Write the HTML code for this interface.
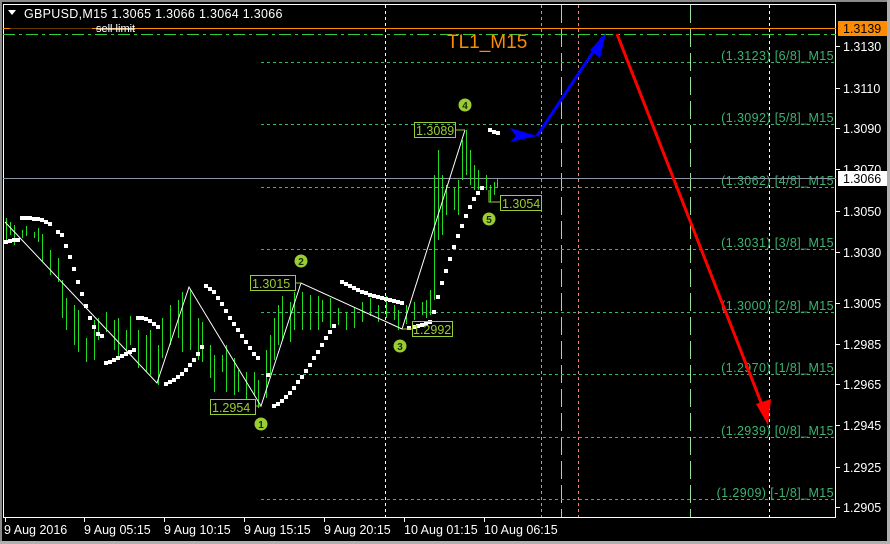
<!DOCTYPE html>
<html><head><meta charset="utf-8"><style>
html,body{margin:0;padding:0;background:#000;width:890px;height:544px;overflow:hidden}
svg{display:block}
text{font-family:"Liberation Sans",sans-serif}
</style></head><body>
<svg width="890" height="544" viewBox="0 0 890 544" xmlns="http://www.w3.org/2000/svg">
<rect width="890" height="544" fill="#000"/>
<rect x="0" y="0" width="890" height="2" fill="#8a8a8a"/>
<rect x="0" y="0" width="2" height="544" fill="#8a8a8a"/>
<rect x="0" y="541" width="890" height="3" fill="#b0b0b0"/>
<rect x="887" y="0" width="3" height="544" fill="#b0b0b0"/>
<path d="M3.5 4.5 H835.5 V517.5 H3.5 Z" fill="none" stroke="#fff" stroke-width="1"/>
<g fill="none" stroke-width="1">
<path d="M385.5 5V517" stroke="#fff" stroke-dasharray="3,3"/>
<path d="M541.5 5V517" stroke="#f08070" stroke-dasharray="3,3"/>
<path d="M578.5 5V517" stroke="#f08070" stroke-dasharray="3,3"/>
<path d="M561.5 5V517" stroke="#98e098" stroke-dasharray="18,6"/>
<path d="M690.5 5V517" stroke="#98e098" stroke-dasharray="18,6"/>
<path d="M769.5 5V517" stroke="#fff" stroke-dasharray="3,3"/>
</g>
<g stroke="#3cb371" stroke-dasharray="3,3" stroke-width="1">
<path d="M261 62.5H835"/><path d="M261 124.5H835"/><path d="M261 187.5H835"/><path d="M261 249.5H835"/>
<path d="M261 312.5H835"/><path d="M261 374.5H835"/><path d="M261 437.5H835"/><path d="M261 499.5H835"/>
</g>
<g fill="#3cb371" font-size="12.5" text-anchor="end" letter-spacing="0.4">
<text x="834" y="60">(1.3123) [6/8]_M15</text>
<text x="834" y="122">(1.3092) [5/8]_M15</text>
<text x="834" y="185">(1.3062) [4/8]_M15</text>
<text x="834" y="247">(1.3031) [3/8]_M15</text>
<text x="834" y="310">(1.3000) [2/8]_M15</text>
<text x="834" y="372">(1.2970) [1/8]_M15</text>
<text x="834" y="435">(1.2939) [0/8]_M15</text>
<text x="834" y="497">(1.2909) [-1/8]_M15</text>
</g>
<path d="M3 28.5H836" stroke="#ff8c00" stroke-width="1"/>
<path d="M3 34.5H836" stroke="#32cd32" stroke-width="1" stroke-dasharray="12,4,3,4"/>
<path d="M3 178.5H836" stroke="#8a96a6" stroke-width="1"/>
<rect x="10" y="20" width="82" height="14" fill="#000" opacity="0.6"/>
<text x="96" y="32" font-size="11" fill="#fff" text-decoration="line-through">sell limit</text>
<text x="447" y="48" font-size="19" fill="#ff8c00">TL1_M15</text>
<path stroke="#22dd22" stroke-width="1" fill="none" d="
M6.5 218V240 M10.5 222V235 M14.5 225V245 M22.5 230V238 M26.5 226V236 M34.5 232V238 M38.5 228V242 M42.5 234V262 M50.5 250V275 M58.5 258V282
M62.5 280V318 M66.5 298V330 M74.5 305V345 M78.5 310V352 M86.5 338V362 M94.5 320V360 M98.5 318V340 M106.5 312V332 M114.5 320V350 M118.5 318V360 M126.5 330V355 M130.5 316V345
M138.5 330V368 M146.5 335V372 M150.5 330V375 M158.5 345V385 M162.5 318V358 M170.5 305V345 M178.5 300V338 M182.5 292V352 M190.5 290V350 M198.5 318V360 M202.5 322V362
M210.5 345V378 M214.5 355V392 M222.5 355V372 M226.5 345V392 M234.5 358V395 M238.5 370V392 M246.5 372V400 M254.5 372V396 M258.5 380V408 M266.5 350V398 M270.5 335V375
M274.5 318V360 M278.5 305V345 M282.5 296V340 M290.5 302V342 M294.5 292V330 M302.5 292V330 M310.5 295V330 M318.5 296V330 M322.5 300V322 M330.5 298V328 M338.5 308V325 M346.5 312V330 M354.5 308V328 M362.5 302V322 M370.5 298V316 M378.5 305V322 M386.5 296V318 M394.5 305V320 M398.5 310V330 M406.5 305V324 M414.5 302V320 M422.5 302V315 M426.5 300V318 M430.5 290V315
M434.5 175V300 M438.5 150V240 M442.5 175V235 M446.5 185V215 M454.5 188V210 M458.5 180V215 M462.5 140V180 M466.5 130V175 M470.5 150V185 M474.5 165V190 M478.5 170V190 M486.5 175V190 M490.5 185V202 M494.5 182V195 M497.5 178V188"/>
<g fill="#fff">
<rect x="4" y="240" width="4" height="4"/><rect x="8" y="239" width="4" height="4"/><rect x="12" y="238" width="4" height="4"/><rect x="16" y="238" width="4" height="4"/>
<rect x="20" y="216" width="4" height="4"/><rect x="24" y="216" width="4" height="4"/><rect x="28" y="216" width="4" height="4"/><rect x="32" y="217" width="4" height="4"/><rect x="36" y="217" width="4" height="4"/><rect x="40" y="218" width="4" height="4"/><rect x="44" y="220" width="4" height="4"/><rect x="48" y="222" width="4" height="4"/><rect x="56" y="230" width="4" height="4"/><rect x="60" y="233" width="4" height="4"/><rect x="64" y="244" width="4" height="4"/><rect x="68" y="255" width="4" height="4"/><rect x="72" y="267" width="4" height="4"/><rect x="76" y="280" width="4" height="4"/><rect x="80" y="292" width="4" height="4"/><rect x="84" y="304" width="4" height="4"/><rect x="88" y="316" width="4" height="4"/><rect x="92" y="325" width="4" height="4"/>
<rect x="96" y="332" width="4" height="4"/><rect x="100" y="334" width="4" height="4"/><rect x="104" y="361" width="4" height="4"/><rect x="108" y="360" width="4" height="4"/><rect x="112" y="358" width="4" height="4"/><rect x="116" y="356" width="4" height="4"/><rect x="120" y="354" width="4" height="4"/><rect x="124" y="352" width="4" height="4"/><rect x="128" y="350" width="4" height="4"/><rect x="132" y="348" width="4" height="4"/>
<rect x="136" y="316" width="4" height="4"/><rect x="140" y="316" width="4" height="4"/><rect x="144" y="317" width="4" height="4"/><rect x="148" y="319" width="4" height="4"/><rect x="152" y="322" width="4" height="4"/><rect x="156" y="325" width="4" height="4"/>
<rect x="164" y="382" width="4" height="4"/><rect x="168" y="380" width="4" height="4"/><rect x="172" y="378" width="4" height="4"/><rect x="176" y="375" width="4" height="4"/><rect x="180" y="372" width="4" height="4"/><rect x="184" y="368" width="4" height="4"/><rect x="188" y="363" width="4" height="4"/><rect x="192" y="358" width="4" height="4"/><rect x="196" y="352" width="4" height="4"/><rect x="200" y="345" width="4" height="4"/>
<rect x="204" y="284" width="4" height="4"/><rect x="208" y="287" width="4" height="4"/><rect x="212" y="290" width="4" height="4"/><rect x="216" y="296" width="4" height="4"/><rect x="220" y="302" width="4" height="4"/><rect x="224" y="309" width="4" height="4"/><rect x="228" y="316" width="4" height="4"/><rect x="232" y="322" width="4" height="4"/><rect x="236" y="328" width="4" height="4"/><rect x="240" y="334" width="4" height="4"/><rect x="244" y="340" width="4" height="4"/><rect x="248" y="346" width="4" height="4"/><rect x="252" y="352" width="4" height="4"/><rect x="256" y="356" width="4" height="4"/><rect x="266" y="373" width="4" height="4"/>
<rect x="272" y="404" width="4" height="4"/><rect x="276" y="402" width="4" height="4"/><rect x="280" y="399" width="4" height="4"/><rect x="284" y="395" width="4" height="4"/><rect x="288" y="391" width="4" height="4"/><rect x="292" y="386" width="4" height="4"/><rect x="296" y="380" width="4" height="4"/><rect x="300" y="375" width="4" height="4"/><rect x="304" y="369" width="4" height="4"/><rect x="308" y="363" width="4" height="4"/><rect x="312" y="356" width="4" height="4"/><rect x="316" y="350" width="4" height="4"/><rect x="320" y="343" width="4" height="4"/><rect x="324" y="336" width="4" height="4"/><rect x="328" y="330" width="4" height="4"/><rect x="332" y="324" width="4" height="4"/>
<rect x="340" y="280" width="4" height="4"/><rect x="344" y="282" width="4" height="4"/><rect x="348" y="284" width="4" height="4"/><rect x="352" y="286" width="4" height="4"/><rect x="356" y="288" width="4" height="4"/><rect x="360" y="290" width="4" height="4"/><rect x="364" y="291" width="4" height="4"/><rect x="368" y="293" width="4" height="4"/><rect x="372" y="294" width="4" height="4"/><rect x="376" y="295" width="4" height="4"/><rect x="380" y="296" width="4" height="4"/><rect x="384" y="297" width="4" height="4"/><rect x="388" y="298" width="4" height="4"/><rect x="392" y="299" width="4" height="4"/><rect x="396" y="300" width="4" height="4"/><rect x="400" y="301" width="4" height="4"/>
<rect x="407" y="326" width="4" height="4"/><rect x="412" y="325" width="4" height="4"/><rect x="416" y="324" width="4" height="4"/><rect x="420" y="323" width="4" height="4"/><rect x="424" y="322" width="4" height="4"/><rect x="428" y="320" width="4" height="4"/><rect x="432" y="310" width="4" height="4"/><rect x="436" y="295" width="4" height="4"/><rect x="440" y="281" width="4" height="4"/><rect x="444" y="269" width="4" height="4"/><rect x="448" y="257" width="4" height="4"/><rect x="452" y="245" width="4" height="4"/><rect x="456" y="234" width="4" height="4"/><rect x="460" y="224" width="4" height="4"/><rect x="464" y="214" width="4" height="4"/><rect x="468" y="205" width="4" height="4"/><rect x="472" y="197" width="4" height="4"/><rect x="476" y="191" width="4" height="4"/><rect x="480" y="186" width="4" height="4"/>
<rect x="488" y="128" width="4" height="4"/><rect x="492" y="130" width="4" height="4"/><rect x="496" y="131" width="4" height="4"/>
</g>
<polyline fill="none" stroke="#fff" stroke-width="1" points="5,222 157,383 189,287 261,406 301,283 402,329 465,130"/>
<g fill="none" stroke="#9acd32" stroke-width="1">
<path d="M295 283H301"/><path d="M255 406H261"/><path d="M402 329H412"/><path d="M455 130H465"/><path d="M489 190V202H500"/>
<rect x="250.5" y="275.5" width="45" height="15"/><rect x="210.5" y="399.5" width="45" height="15"/><rect x="412.5" y="321.5" width="40" height="15"/><rect x="414.5" y="122.5" width="41" height="15"/><rect x="500.5" y="195.5" width="41" height="15"/>
</g>
<g fill="#9acd32" font-size="12.5">
<text x="252" y="288">1.3015</text><text x="212" y="412">1.2954</text><text x="413" y="334">1.2992</text><text x="416" y="135">1.3089</text><text x="502" y="208">1.3054</text>
</g>
<g fill="#9acd32"><circle cx="261" cy="424" r="6.5"/><circle cx="301" cy="261" r="6.5"/><circle cx="400" cy="346" r="6.5"/><circle cx="465" cy="105" r="6.5"/><circle cx="489" cy="219" r="6.5"/></g>
<g fill="#1a2a00" font-size="10" font-weight="bold" text-anchor="middle">
<text x="261" y="428">1</text><text x="301" y="265">2</text><text x="400" y="350">3</text><text x="465" y="109">4</text><text x="489" y="223">5</text>
</g>
<path d="M537 136 L603 37" stroke="#0000ff" stroke-width="3" fill="none"/>
<polygon points="510,128 537,136 510,142 516,136" fill="#0000ff"/>
<polygon points="606,33 600,58 590,50" fill="#0000ff"/>
<path d="M617 34 L764 410" stroke="#ff0000" stroke-width="3" fill="none"/>
<polygon points="768,425 756,404 771,399" fill="#ff0000"/>
<polygon points="8,10 16,10 12,15" fill="#fff"/>
<text x="24" y="18" font-size="12.5" fill="#fff" letter-spacing="0.3">GBPUSD,M15  1.3065 1.3066 1.3064 1.3066</text>
<g stroke="#fff" stroke-width="1">
<path d="M836 46.5h4M836 88.5h4M836 128.5h4M836 169.5h4M836 211.5h4M836 252.5h4M836 303.5h4M836 344.5h4M836 384.5h4M836 425.5h4M836 467.5h4M836 507.5h4"/>
<path d="M5.5 517v5M84.5 517v5M164.5 517v5M244.5 517v5M324.5 517v5M404.5 517v5M484.5 517v5"/>
</g>
<g fill="#fff" font-size="12.5">
<text x="843" y="51">1.3130</text><text x="843" y="93">1.3110</text><text x="843" y="133">1.3090</text><text x="843" y="174">1.3070</text><text x="843" y="216">1.3050</text><text x="843" y="257">1.3030</text><text x="843" y="308">1.3005</text><text x="843" y="349">1.2985</text><text x="843" y="389">1.2965</text><text x="843" y="430">1.2945</text><text x="843" y="472">1.2925</text><text x="843" y="512">1.2905</text>
</g>
<rect x="838" y="21" width="49" height="15" fill="#ff8c00"/>
<text x="843" y="33" font-size="12.5" fill="#000">1.3139</text>
<rect x="838" y="171" width="49" height="15" fill="#fff"/>
<text x="843" y="183" font-size="12.5" fill="#000">1.3066</text>
<g fill="#fff" font-size="12.5">
<text x="4" y="534">9 Aug 2016</text><text x="84" y="534">9 Aug 05:15</text><text x="164" y="534">9 Aug 10:15</text><text x="244" y="534">9 Aug 15:15</text><text x="324" y="534">9 Aug 20:15</text><text x="404" y="534">10 Aug 01:15</text><text x="484" y="534">10 Aug 06:15</text>
</g>
</svg>
</body></html>
